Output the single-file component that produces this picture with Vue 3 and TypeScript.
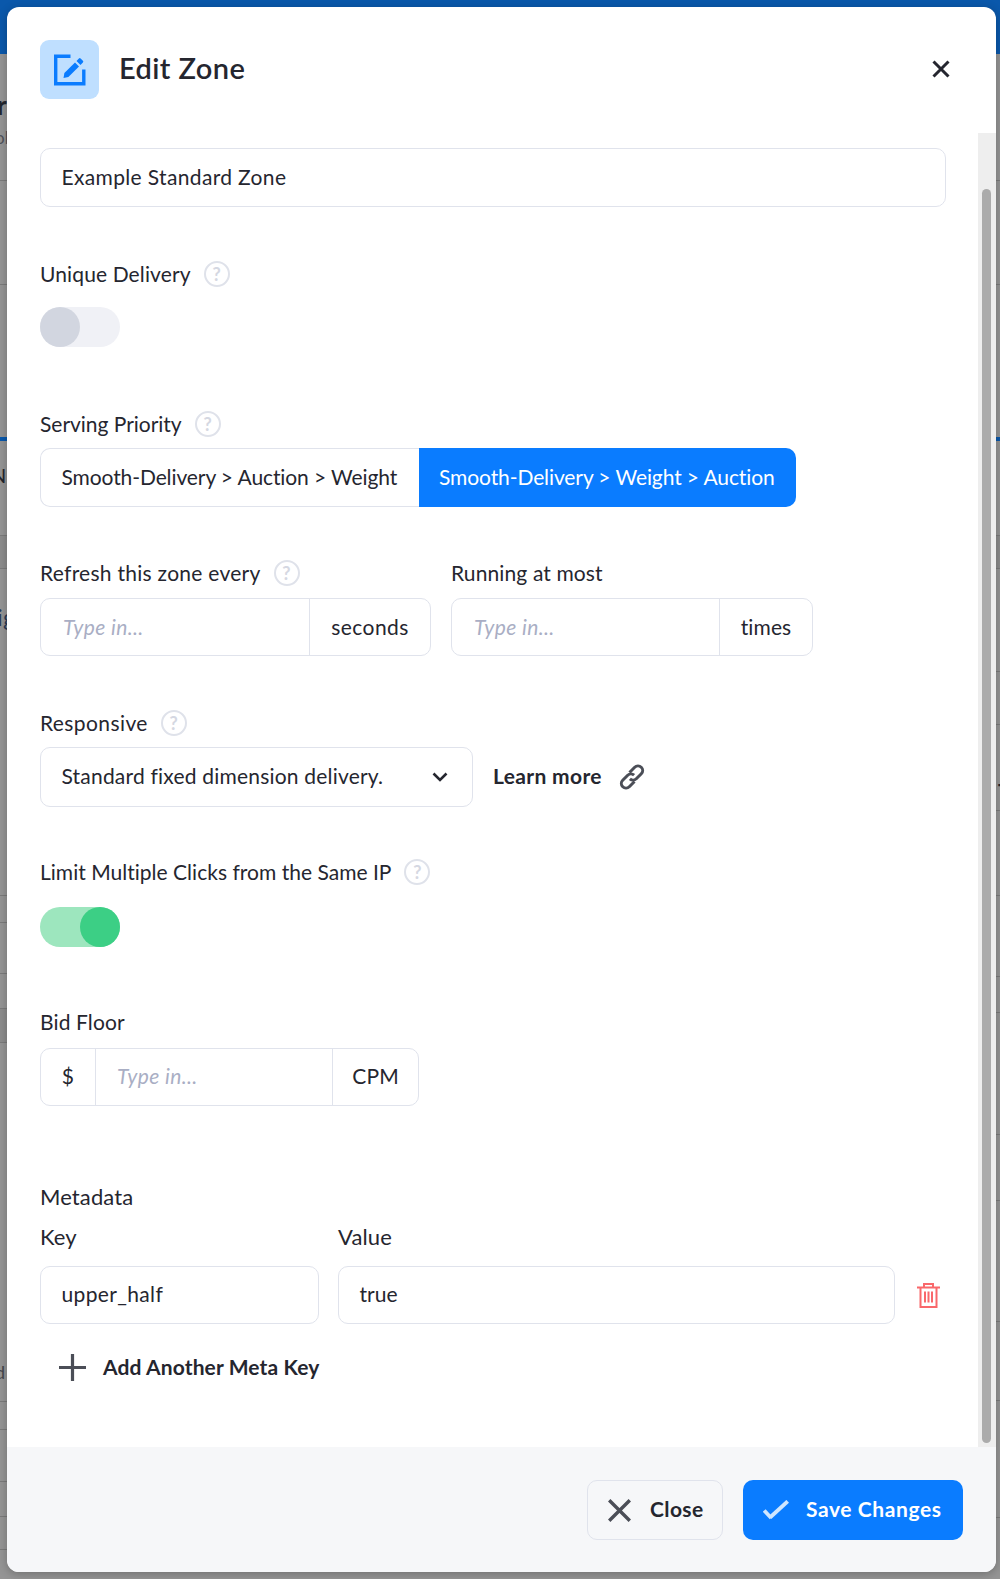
<script setup lang="ts">
const leftLines = [180, 284, 535, 568, 895, 922, 973, 1008, 1042, 1401, 1429, 1481, 1516, 1549]
const rightLines = [180, 284, 535, 568, 671, 724, 810, 895, 976, 1012, 1134, 1200, 1321, 1400, 1517]
</script>

<template>
  <div class="page">
    <div class="topbar"></div>
    <div class="band"></div>
    <div class="tint left-a"></div>
    <div class="tint left-b"></div>
    <div class="tint right-a"></div>
    <i v-for="y in leftLines" :key="'l' + y" class="line left" :style="{ top: y + 'px' }"></i>
    <i v-for="y in rightLines" :key="'r' + y" class="line right" :style="{ top: y + 'px' }"></i>
    <span class="peek p-r">r</span>
    <span class="peek p-ol">ol</span>
    <span class="peek p-n">N</span>
    <span class="peek p-ig">ig</span>
    <span class="peek p-d">d</span>
    <span class="peek p-t">T</span>

    <section class="modal">
      <header class="head">
        <div class="head-icon">
          <svg width="32" height="32" viewBox="0 0 32 32" fill="none">
            <path d="M16.500 2.200H1.700V29.800H29.800V15.500" stroke="#0a7cff" stroke-width="3.400" />
            <path d="M9.500 24l.9-5L21 8.400l4 4L14.400 23z" fill="#0a7cff" />
            <path d="M22.500 6.900l2.400-2.400a1.200 1.200 0 0 1 1.700 0l2.300 2.300a1.200 1.200 0 0 1 0 1.700l-2.400 2.400z" fill="#0a7cff" />
          </svg>
        </div>
        <h1>Edit Zone</h1>
        <svg class="head-close" width="18" height="18" viewBox="0 0 18 18"><path d="M1.500 1.500l15 15M16.500 1.500l-15 15" stroke="#25262f" stroke-width="3" /></svg>
      </header>

      <div class="scroll">
        <div class="form">
          <div class="field box name">Example Standard Zone</div>

          <div class="label unique"><span>Unique Delivery</span><b class="help">?</b></div>
          <div class="toggle off"><i></i></div>

          <div class="label priority"><span>Serving Priority</span><b class="help">?</b></div>
          <div class="segmented">
            <div class="seg">Smooth-Delivery &gt; Auction &gt; Weight</div>
            <div class="seg active">Smooth-Delivery &gt; Weight &gt; Auction</div>
          </div>

          <div class="pair">
            <div class="col first">
              <div class="label refresh"><span>Refresh this zone every</span><b class="help">?</b></div>
              <div class="group">
                <div class="ph grow">Type in...</div>
                <div class="addon seconds">seconds</div>
              </div>
            </div>
            <div class="col second">
              <div class="label"><span>Running at most</span></div>
              <div class="group">
                <div class="ph grow">Type in...</div>
                <div class="addon times">times</div>
              </div>
            </div>
          </div>

          <div class="label responsive"><span>Responsive</span><b class="help">?</b></div>
          <div class="select-row">
            <div class="field select">
              <span>Standard fixed dimension delivery.</span>
              <svg class="chev" width="16" height="10" viewBox="0 0 16 10" fill="none"><path d="M1.500 1.500L8 8l6.500-6.500" stroke="#25262f" stroke-width="2.600" /></svg>
            </div>
            <strong class="learn">Learn more</strong>
            <svg class="link" width="26" height="26" viewBox="0 0 26 26" fill="none" stroke="#4b4e57" stroke-width="3">
              <path d="M10.500 8.500l5.200-5.200a4.600 4.600 0 0 1 6.600 6.500l-5 5a4.600 4.600 0 0 1-6.400 0" />
              <path d="M15.500 17.500l-5.200 5.200a4.600 4.600 0 0 1-6.600-6.500l5-5a4.600 4.600 0 0 1 6.400 0" />
            </svg>
          </div>

          <div class="label limit"><span>Limit Multiple Clicks from the Same IP</span><b class="help">?</b></div>
          <div class="toggle on"><i></i></div>

          <div class="label bid"><span>Bid Floor</span></div>
          <div class="group bid-group">
            <div class="addon dollar">$</div>
            <div class="ph grow">Type in...</div>
            <div class="addon cpm">CPM</div>
          </div>

          <div class="meta-title">Metadata</div>
          <div class="meta-grid">
            <div class="meta-key">
              <div class="meta-label">Key</div>
              <div class="field box key-box">upper_half</div>
            </div>
            <div class="meta-val">
              <div class="meta-label">Value</div>
              <div class="field box val-box">true</div>
            </div>
            <svg class="trash" width="23" height="25" viewBox="0 0 23 25" fill="none" stroke="#f9686b" stroke-width="2">
              <path d="M0 4.500h23M7 4V1h9v3" />
              <path d="M3.500 5v19h16V5" />
              <path d="M8 8.500v11M11.500 8.500v11M15 8.500v11" />
            </svg>
          </div>

          <div class="add">
            <svg width="27" height="27" viewBox="0 0 27 27"><path d="M13.500 0v27M0 13.500h27" stroke="#4b4e57" stroke-width="3.200" /></svg>
            <strong>Add Another Meta Key</strong>
          </div>
        </div>
        <div class="track"><div class="thumb"></div></div>
      </div>

      <footer class="foot">
        <button class="btn close">
          <svg width="23" height="23" viewBox="0 0 23 23"><path d="M1.200 1.200l20.600 20.600M21.800 1.200L1.200 21.800" stroke="#4b4e57" stroke-width="3.400" /></svg>
          <span>Close</span>
        </button>
        <button class="btn save">
          <svg width="26" height="20" viewBox="0 0 26 20" fill="none">
            <path d="M1.200 10.500l7 7.500" stroke="#cfe6ff" stroke-width="3.800" />
            <path d="M7 17.500L24.700 1.300" stroke="#cfe6ff" stroke-width="3.800" />
          </svg>
          <span>Save Changes</span>
        </button>
      </footer>
    </section>
  </div>
</template>

<style>
html, body { margin: 0; padding: 0; }
</style>

<style scoped>
.page { position: relative; width: 1000px; height: 1579px; overflow: hidden; background: #959595; font-family: Lato, "Open Sans", sans-serif; color: #25262f; letter-spacing: 0.12px; font-variant-ligatures: none; }
.topbar { height: 54px; background: #0a58ab; }
.band { position: absolute; left: 0; top: 437px; width: 1000px; height: 4px; background: #0a58ab; }
.tint { position: absolute; background: rgba(0, 0, 0, 0.06); }
.left-a { left: 0; width: 8px; top: 535px; height: 33px; }
.left-b { left: 0; width: 8px; top: 1008px; height: 34px; }
.right-a { right: 0; width: 5px; top: 535px; height: 33px; }
.line { position: absolute; width: 8px; height: 1px; background: #7b7b7b; }
.line.left { left: 0; }
.line.right { right: 0; width: 5px; }
.peek { position: absolute; font-size: 24px; line-height: 28px; font-weight: 700; color: #23262e; }
.p-r { left: -3px; top: 91px; font-size: 26px; }
.p-ol { left: -5px; top: 124px; font-size: 17px; font-weight: 400; color: #50525a; }
.p-n { left: -9px; top: 461px; font-size: 20px; font-weight: 400; }
.p-ig { left: -3px; top: 603px; font-weight: 400; color: #2b3a55; }
.p-d { left: -5px; top: 1358px; font-size: 18px; font-weight: 400; color: #45474d; }
.p-t { right: -10px; top: 777px; font-size: 20px; }

.modal { position: absolute; left: 7px; top: 7px; width: 989px; height: 1565px; background: #fff; border-radius: 12px; display: flex; flex-direction: column; overflow: hidden; box-shadow: 0 2px 10px rgba(0, 0, 0, 0.25); }
.head { height: 126px; display: flex; align-items: flex-start; padding: 33px 33px 0; box-sizing: border-box; flex: none; }
.head-icon { width: 59px; height: 59px; border-radius: 9px; background: #bfdfff; display: flex; align-items: center; justify-content: center; flex: none; }
h1 { margin: 0 0 0 20px; font-size: 29px; line-height: 55px; font-weight: 600; letter-spacing: 0.4px; color: #25262f; }
.head-close { margin-left: auto; margin-top: 20px; margin-right: 13px; }

.scroll { flex: 1; display: flex; min-height: 0; }
.form { flex: 1; padding: 15px 0 0 33px; min-width: 0; }
.track { width: 18px; background: #eee; position: relative; flex: none; }
.thumb { position: absolute; left: 4px; top: 56px; bottom: 4px; width: 9px; border-radius: 5px; background: #ababab; }

.field { height: 59px; box-sizing: border-box; border: 1px solid #e0e3ec; border-radius: 10px; font-size: 21px; display: flex; align-items: center; padding: 0 20.500px 3px; }
.name { width: 906px; }
.box { color: #25262f; letter-spacing: 0.35px; }
.key-box { letter-spacing: 0.35px; }
.val-box { letter-spacing: 0; }

.label { display: flex; align-items: center; font-size: 21px; height: 28px; box-sizing: border-box; padding-bottom: 2px; }
.label span { margin-bottom: 1px; }
.help { margin-left: 13px; width: 22px; height: 22px; border: 2px solid #dfe2ea; border-radius: 50%; font-size: 18px; font-weight: 700; color: #d5d8e2; display: flex; align-items: center; justify-content: center; flex: none; }

.unique { margin-top: 54px; }
.toggle { margin-top: 18px; width: 80px; height: 40px; border-radius: 20px; position: relative; }
.toggle i { position: absolute; top: 0; width: 40px; height: 40px; border-radius: 50%; }
.toggle.off { background: #f0f1f6; }
.toggle.off i { left: 0; background: #d2d6e0; }
.toggle.on { background: #9de6be; margin-top: 20px; }
.toggle.on i { right: 0; background: #3ccf85; }

.priority { margin-top: 64px; letter-spacing: -0.02px; }
.segmented { display: flex; margin-top: 9px; height: 59px; }
.seg { font-size: 21px; display: flex; align-items: center; box-sizing: border-box; letter-spacing: -0.1px; padding-bottom: 3px; }
.seg:first-child { width: 379px; border: 1px solid #e0e3ec; border-right: 0; border-radius: 10px 0 0 10px; padding-left: 20.500px; }
.seg.active { width: 377px; background: #0a7cff; color: #fff; border-radius: 0 10px 10px 0; padding-left: 20px; }

.pair { display: flex; margin-top: 53px; }
.col.first { width: 391px; margin-right: 20px; }
.col.second { width: 362px; }
.refresh { letter-spacing: 0.27px; }
.pair .group { margin-top: 10px; }
.pair .ph, .pair .addon { padding-bottom: 1px; }
.group { display: flex; height: 58px; border: 1px solid #e0e3ec; border-radius: 10px; box-sizing: border-box; font-size: 21px; align-items: stretch; }
.grow { flex: 1; min-width: 0; }
.ph { display: flex; align-items: center; padding: 0 0 3px 22px; font-style: italic; color: #a9aec4; letter-spacing: 0.4px; }
.addon { display: flex; align-items: center; justify-content: center; box-sizing: border-box; flex: none; padding-bottom: 3px; }
.seconds { width: 121px; border-left: 1px solid #e0e3ec; letter-spacing: 0.45px; }
.times { width: 93px; border-left: 1px solid #e0e3ec; }

.responsive { margin-top: 54px; letter-spacing: 0.4px; }
.select-row { display: flex; align-items: center; margin-top: 9px; }
.select { width: 433px; justify-content: space-between; padding-right: 24px; height: 60px; letter-spacing: 0.2px; }
.chev { margin-top: 3px; }
.learn { margin-left: 20px; font-size: 21px; font-weight: 700; letter-spacing: 0.35px; padding-bottom: 3px; }
.link { margin-left: 17px; }

.limit { margin-top: 52px; letter-spacing: 0.02px; }

.bid { margin-top: 62px; }
.bid-group { margin-top: 11px; width: 379px; }
.dollar { width: 55px; border-right: 1px solid #e0e3ec; }
.bid-group .ph { padding-left: 21px; }
.cpm { width: 86px; border-left: 1px solid #e0e3ec; }

.meta-title { margin-top: 77px; font-size: 22px; line-height: 28px; margin-bottom: 13px; }
.meta-grid { display: flex; align-items: flex-end; }
.meta-label { font-size: 22px; line-height: 28px; margin-bottom: 14px; position: relative; top: -1px; }
.meta-grid .field { height: 58px; }
.meta-key { width: 279px; margin-right: 19px; flex: none; }
.meta-val { width: 557px; margin-right: 22px; flex: none; }
.trash { margin-bottom: 16px; flex: none; }

.add { display: flex; align-items: center; margin-top: 30px; margin-left: 19px; height: 27px; }
.add strong { margin-left: 17px; font-size: 21px; line-height: 25px; font-weight: 700; letter-spacing: 0.12px; padding-bottom: 3px; }

.foot { height: 125px; flex: none; background: #f6f7f9; display: flex; justify-content: flex-end; padding: 33px 33px 0 0; box-sizing: border-box; gap: 20px; }
.btn { height: 60px; border-radius: 10px; box-sizing: border-box; font-family: inherit; font-size: 21px; font-weight: 700; display: flex; align-items: center; padding: 0; font-variant-ligatures: none; }
.btn span { padding-bottom: 4px; }
.close { width: 136px; border: 1px solid #e0e3ec; background: #f6f7f9; color: #25262f; padding-left: 20px; gap: 19px; letter-spacing: 0.4px; }
.save { width: 220px; border: 0; background: #0a7cff; color: #fff; padding-left: 20px; gap: 17px; letter-spacing: 0.6px; }
</style>
